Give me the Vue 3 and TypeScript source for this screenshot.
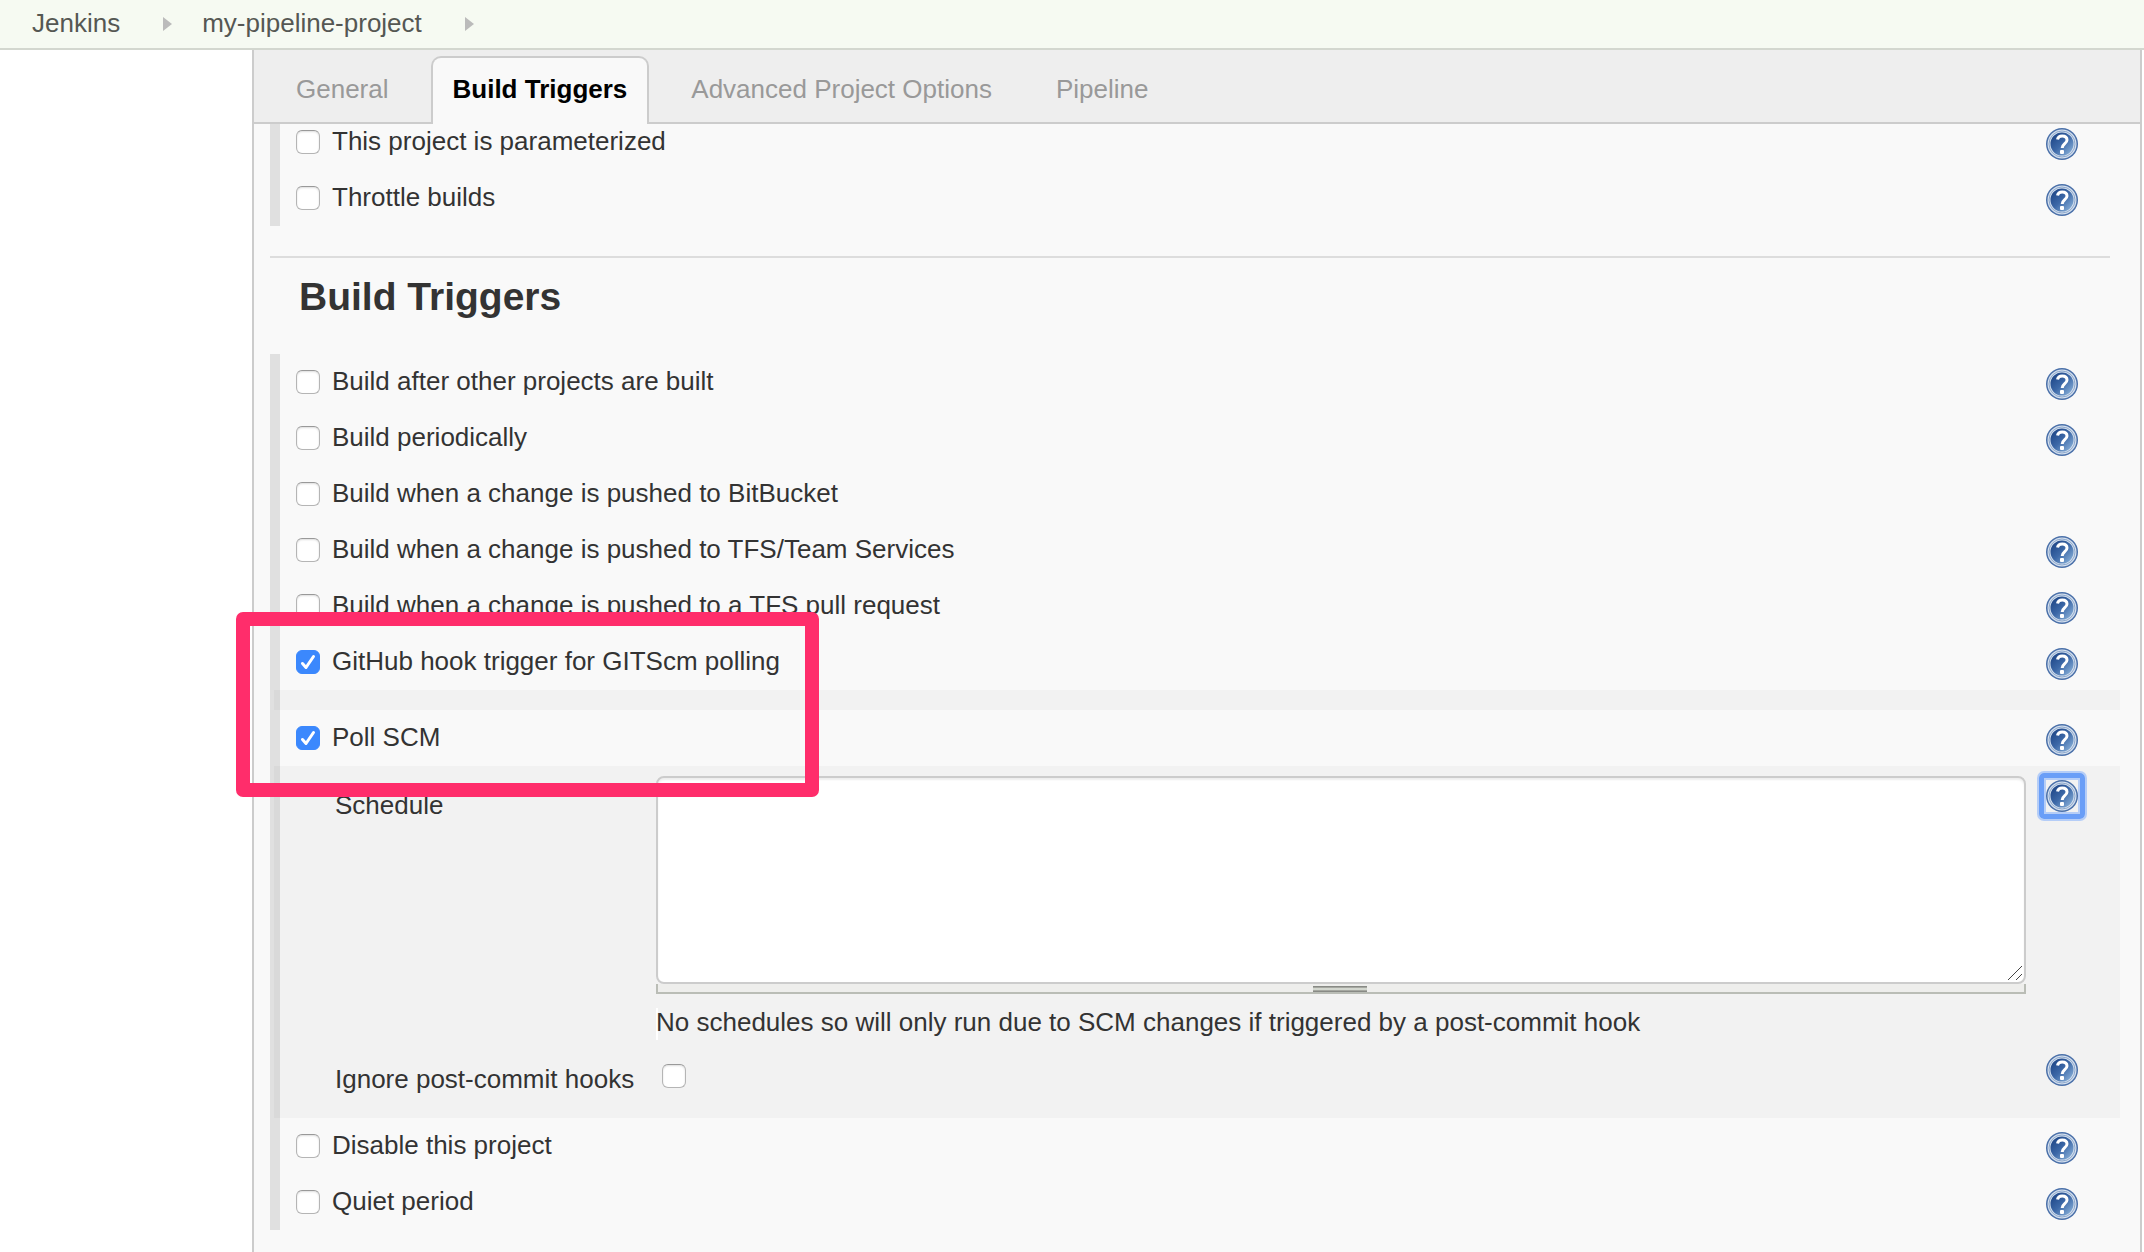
<script setup lang="ts">
import { ref } from 'vue'

interface Option {
  id: string
  label: string
  checked: boolean
  help: boolean
  spacer?: boolean
  details?: boolean
}

const crumbs = ['Jenkins', 'my-pipeline-project']
const tabs = ['General', 'Build Triggers', 'Advanced Project Options', 'Pipeline']
const activeTab = ref('Build Triggers')

const general = ref<Option[]>([
  { id: 'parameterized', label: 'This project is parameterized', checked: false, help: true },
  { id: 'throttle', label: 'Throttle builds', checked: false, help: true },
])

const triggers = ref<Option[]>([
  { id: 'after', label: 'Build after other projects are built', checked: false, help: true },
  { id: 'periodic', label: 'Build periodically', checked: false, help: true },
  { id: 'bitbucket', label: 'Build when a change is pushed to BitBucket', checked: false, help: false },
  { id: 'tfs', label: 'Build when a change is pushed to TFS/Team Services', checked: false, help: true },
  { id: 'tfs-pr', label: 'Build when a change is pushed to a TFS pull request', checked: false, help: true },
  { id: 'github', label: 'GitHub hook trigger for GITScm polling', checked: true, help: true, spacer: true },
  { id: 'poll', label: 'Poll SCM', checked: true, help: true, details: true },
  { id: 'disable', label: 'Disable this project', checked: false, help: true },
  { id: 'quiet', label: 'Quiet period', checked: false, help: true },
])

const sections = [
  { title: '', options: general },
  { title: 'Build Triggers', options: triggers },
]

const schedule = ref('')
const ignoreHooks = ref(false)
</script>

<template>
  <svg class="defs" width="0" height="0" aria-hidden="true">
    <defs>
      <linearGradient id="helpFill" x1="0" y1="0" x2="1" y2="1">
        <stop offset="0.15" stop-color="#1f4788" />
        <stop offset="0.5" stop-color="#3d69a8" />
        <stop offset="0.9" stop-color="#8db4dc" />
      </linearGradient>
      <symbol id="help" viewBox="0 0 32 32">
        <circle cx="16" cy="16" r="16" fill="#4a70a9" />
        <circle cx="16" cy="16" r="13" fill="url(#helpFill)" stroke="#d5e0ee" stroke-width="3" />
        <circle cx="16" cy="16" r="13" fill="none" stroke="#8ea9cd" stroke-width="1" />
        <path d="M11.500 11.500C12 8.800 14 8 16.200 8c3 0 4.800 1.600 4.800 4 0 3.600-4.800 3.800-4.800 8" fill="none" stroke="#fff" stroke-width="3" />
        <rect x="14" y="22" width="4" height="4" rx="1" fill="#fff" />
      </symbol>
    </defs>
  </svg>

  <div class="page">
    <nav class="crumbs" aria-label="Breadcrumb">
      <template v-for="crumb in crumbs" :key="crumb">
        <a href="#">{{ crumb }}</a>
        <svg class="arrow" viewBox="0 0 9 14" aria-hidden="true"><path d="M0 0L9 7L0 14Z" fill="#bbb" /></svg>
      </template>
    </nav>

    <main class="panel">
      <div class="tabs" role="tablist">
        <button
          v-for="tab in tabs"
          :key="tab"
          type="button"
          role="tab"
          class="tab"
          :class="{ active: tab === activeTab }"
          :aria-selected="tab === activeTab"
          @click="activeTab = tab"
        >{{ tab }}</button>
      </div>

      <form class="form" @submit.prevent>
        <section v-for="section in sections" :key="section.title" class="section">
          <h2 v-if="section.title">{{ section.title }}</h2>
          <div class="group">
            <template v-for="opt in section.options.value" :key="opt.id">
              <div class="row">
                <span class="check">
                  <input :id="opt.id" v-model="opt.checked" type="checkbox" />
                  <svg v-if="opt.checked" viewBox="0 0 24 24" aria-hidden="true"><path d="M6.500 13.500L10 17.500L17.500 6.500" /></svg>
                </span>
                <label :for="opt.id">{{ opt.label }}</label>
                <button v-if="opt.help" type="button" class="help" :aria-label="'Help for ' + opt.label">
                  <svg aria-hidden="true"><use href="#help" /></svg>
                </button>
              </div>

              <div v-if="opt.spacer" class="spacer"></div>

              <div v-if="opt.details" class="details">
                <div class="field">
                  <label for="schedule" class="name">Schedule</label>
                  <div class="control">
                    <div class="area">
                      <textarea id="schedule" v-model="schedule"></textarea>
                      <svg class="corner" viewBox="0 0 16 16" aria-hidden="true"><path d="M1 15L15 1M9 15L15 9" /></svg>
                    </div>
                    <div class="handle"><span></span></div>
                    <p class="note">No schedules so will only run due to SCM changes if triggered by a post-commit hook</p>
                  </div>
                  <button type="button" class="help focused" aria-label="Help for Schedule">
                    <svg aria-hidden="true"><use href="#help" /></svg>
                  </button>
                </div>
                <div class="field ignore">
                  <label for="ignore" class="name">Ignore post-commit hooks</label>
                  <span class="control check">
                    <input id="ignore" v-model="ignoreHooks" type="checkbox" />
                    <svg v-if="ignoreHooks" viewBox="0 0 24 24" aria-hidden="true"><path d="M6.500 13.500L10 17.500L17.500 6.500" /></svg>
                  </span>
                  <button type="button" class="help" aria-label="Help for Ignore post-commit hooks">
                    <svg aria-hidden="true"><use href="#help" /></svg>
                  </button>
                </div>
              </div>
            </template>
          </div>
        </section>
      </form>
      <div class="highlight" aria-hidden="true"></div>
    </main>
  </div>
</template>

<style>
body {
  background: #fff;
}
</style>

<style scoped>
* {
  box-sizing: border-box;
}
.defs {
  position: absolute;
}
.page {
  display: flex;
  flex-direction: column;
  min-height: 100vh;
  font: 26px/32px "Liberation Sans", Arial, sans-serif;
  color: #333;
}
.crumbs {
  display: flex;
  align-items: center;
  height: 50px;
  padding: 0 32px 2px;
  background: #f6faf2;
  border-bottom: 2px solid #d3d7cf;
}
.crumbs a {
  color: #555753;
  text-decoration: none;
}
.arrow {
  width: 9px;
  height: 14px;
  margin: 2px 30px 0 43px;
}
.panel {
  position: relative;
  flex: 1;
  margin: 0 2px 0 252px;
  border: solid #ccc;
  border-width: 0 2px;
  background: #f9f9f9;
}
.tabs {
  position: relative;
  z-index: 1;
  display: flex;
  align-items: flex-end;
  gap: 20px;
  height: 74px;
  padding-left: 20px;
  background: #eee;
  border-bottom: 2px solid #ccc;
}
.tab {
  height: 68px;
  margin-bottom: -2px;
  padding: 0 20px 4px;
  border: 2px solid transparent;
  border-bottom: 0;
  border-radius: 10px 10px 0 0;
  background: none;
  font: inherit;
  color: #999;
}
.tab.active {
  border-color: #ccc;
  background: #f9f9f9;
  font-weight: bold;
  color: #000;
}
.form {
  margin-top: -10px;
  padding: 0 20px 22px 16px;
}
.section + .section {
  margin-top: 30px;
}
.section h2 {
  margin: 0 10px 0 0;
  padding: 15px 29px 33px;
  border-top: 2px solid #ddd;
  font-size: 39px;
  line-height: 48px;
}
.group {
  border-left: 10px solid #e0e0e0;
}
.row {
  display: flex;
  align-items: flex-start;
  height: 56px;
  padding: 11px 42px 0 16px;
}
.row label {
  flex: 1;
  margin-left: 12px;
}
.check {
  display: grid;
  width: 24px;
  margin-top: 5px;
}
.check > * {
  grid-area: 1 / 1;
  width: 24px;
  height: 24px;
  margin: 0;
}
.check input {
  appearance: none;
  border: 1px solid #b5b5b5;
  border-top-color: #999;
  border-radius: 6px;
  background: #fff;
  box-shadow: inset 0 1px 2px #ddd;
}
.check input:checked {
  border-color: #3b88fd;
  background: #3b88fd;
  box-shadow: none;
}
.check svg {
  pointer-events: none;
  fill: none;
  stroke: #fff;
  stroke-width: 3;
  stroke-linecap: round;
  stroke-linejoin: round;
}
.help {
  position: relative;
  width: 32px;
  height: 32px;
  margin-top: 3px;
  padding: 0;
  border: 0;
  border-radius: 16px;
  background: none;
}
.help svg {
  display: block;
  width: 32px;
  height: 32px;
}
.help.focused {
  margin-top: 4px;
}
.help.focused::before {
  content: "";
  position: absolute;
  inset: -7px;
  border: 5px solid #6a9ef7;
  border-radius: 5px;
  box-shadow: 0 0 0 2px #b5cdf7, inset 0 0 0 2px #b5cdf7;
}
.spacer,
.details {
  margin-left: -6px;
  background: rgba(0, 0, 0, 0.028);
}
.spacer {
  height: 20px;
}
.details {
  padding: 10px 42px 23px 61px;
}
.field {
  display: flex;
  align-items: flex-start;
}
.name {
  width: 321px;
  margin-top: 13px;
}
.control {
  flex: 1;
  margin-right: 20px;
}
.area {
  position: relative;
}
textarea {
  display: block;
  width: 100%;
  height: 208px;
  padding: 6px;
  border: 2px solid #ccc;
  border-radius: 8px;
  background: #fff;
  box-shadow: inset 0 2px 2px #eee;
  font: inherit;
  color: inherit;
  resize: none;
}
.corner {
  position: absolute;
  right: 3px;
  bottom: 3px;
  width: 16px;
  height: 16px;
  stroke: #444;
  stroke-width: 1;
}
.handle {
  display: flex;
  justify-content: center;
  height: 10px;
  padding: 2px 2px 0 0;
  border: 2px solid #babdb6;
  border-top: 0;
  background: #eeeeec;
}
.handle span {
  width: 54px;
  height: 6px;
  border: solid #888a85;
  border-width: 1px 0;
  background: #d3d7cf;
  box-shadow: inset 0 1px #a5a7a0, inset 0 -1px #a5a7a0;
}
.note {
  height: 32px;
  margin: 14px 0 0;
  box-shadow: inset 2px 0 #fff;
  line-height: 28px;
}
.ignore {
  margin-top: 14px;
}
.ignore .name {
  margin-top: 9px;
}
.ignore .control {
  margin: 10px 20px 0 6px;
}
.ignore .help {
  margin-top: 0;
}
.highlight {
  position: absolute;
  left: -18px;
  top: 562px;
  width: 583px;
  height: 185px;
  border: 14px solid #ff2d6b;
  border-radius: 7px;
  pointer-events: none;
}
</style>
